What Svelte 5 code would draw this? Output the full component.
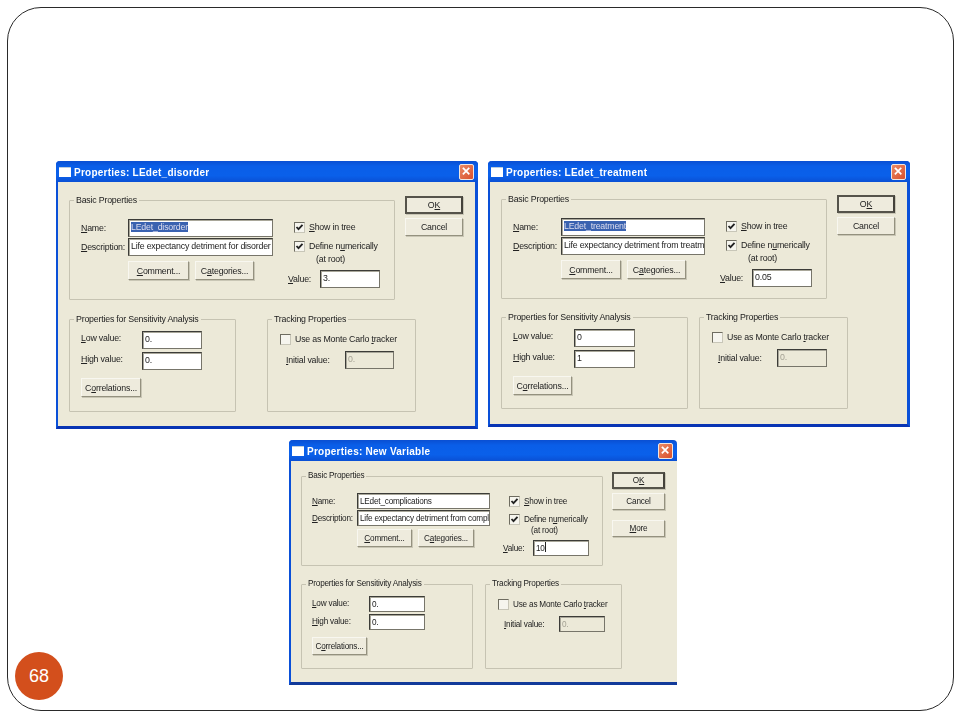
<script lang="ts">
	interface Dialog {
		key: string;
		title: string;
		name: string;
		description: string;
		selected: boolean;
		value: string;
		low: string;
		high: string;
		more: boolean;
	}

	const dialogs: Dialog[] = [
		{
			key: 'first',
			title: 'Properties: LEdet_disorder',
			name: 'LEdet_disorder',
			description: 'Life expectancy detriment for disorder',
			selected: true,
			value: '3.',
			low: '0.',
			high: '0.',
			more: false
		},
		{
			key: 'second',
			title: 'Properties: LEdet_treatment',
			name: 'LEdet_treatment',
			description: 'Life expectancy detriment from treatm',
			selected: true,
			value: '0.05',
			low: '0',
			high: '1',
			more: false
		},
		{
			key: 'third',
			title: 'Properties: New Variable',
			name: 'LEdet_complications',
			description: 'Life expectancy detriment from compl',
			selected: false,
			value: '10',
			low: '0.',
			high: '0.',
			more: true
		}
	];
</script>

<div class="slide">
	<div class="frame">
		{#each dialogs as d (d.key)}
			<section class="dialog {d.key}">
				<header class="titlebar">
					<span class="app-icon"></span>
					<h2>{d.title}</h2>
					<span class="close">
						<svg width="15" height="15" viewBox="0 0 15 15">
							<path d="M4 4l6 6M10 4l-6 6" stroke="#fff" stroke-width="2" stroke-linecap="square" />
						</svg>
					</span>
				</header>

				<div class="body">
					<fieldset class="group basic">
						<legend>Basic Properties</legend>
						<div class="basic-inner">
							<div class="fields">
								<div class="row">
									<span class="label"><u>N</u>ame:</span>
									<div class="input wide">
										{#if d.selected}<span class="sel">{d.name}</span>{:else}{d.name}{/if}
									</div>
								</div>
								<div class="row">
									<span class="label"><u>D</u>escription:</span>
									<div class="input wide">{d.description}</div>
								</div>
								<div class="actions">
									<button class="btn comment"><u>C</u>omment...</button>
									<button class="btn categories">C<u>a</u>tegories...</button>
								</div>
							</div>
							<div class="options">
								<div class="check">
									<span class="box">
										<svg width="9" height="9" viewBox="0 0 9 9"><path d="M1.5 4l2 2.2L7.5 1.8" fill="none" stroke="#222" stroke-width="1.8" /></svg>
									</span>
									<span><u>S</u>how in tree</span>
								</div>
								<div class="check define">
									<span class="box">
										<svg width="9" height="9" viewBox="0 0 9 9"><path d="M1.5 4l2 2.2L7.5 1.8" fill="none" stroke="#222" stroke-width="1.8" /></svg>
									</span>
									<span>Define n<u>u</u>merically</span>
								</div>
								<div class="at-root">(at root)</div>
								<div class="value-row">
									<span class="value-label"><u>V</u>alue:</span>
									<div class="input value">{d.value}{#if d.more}<span class="caret"></span>{/if}</div>
								</div>
							</div>
						</div>
					</fieldset>

					<div class="buttons">
						<button class="btn main default">O<u>K</u></button>
						<button class="btn main">Cancel</button>
						{#if d.more}
							<button class="btn main more"><u>M</u>ore</button>
						{/if}
					</div>

					<div class="lower">
						<fieldset class="group sens">
							<legend>Properties for Sensitivity Analysis</legend>
							<div class="sens-inner">
								<div class="row">
									<span class="label num"><u>L</u>ow value:</span>
									<div class="input num-input">{d.low}</div>
								</div>
								<div class="row">
									<span class="label num"><u>H</u>igh value:</span>
									<div class="input num-input">{d.high}</div>
								</div>
								<button class="btn corr">C<u>o</u>rrelations...</button>
							</div>
						</fieldset>
						<fieldset class="group track">
							<legend>Tracking Properties</legend>
							<div class="track-inner">
								<div class="check">
									<span class="box"></span>
									<span>Use as Monte Carlo <u>t</u>racker</span>
								</div>
								<div class="row initial">
									<span class="label init"><u>I</u>nitial value:</span>
									<div class="input disabled">0.</div>
								</div>
							</div>
						</fieldset>
					</div>
				</div>
			</section>
		{/each}

		<div class="badge">68</div>
	</div>
</div>

<style>
	:global(body) {
		margin: 0;
		background: #fff;
	}

	.slide {
		width: 960px;
		height: 720px;
		padding: 7px 6px 9px 7px;
		box-sizing: border-box;
		display: flex;
		overflow: hidden;
		background: #fff;
	}

	.frame {
		flex: 1;
		position: relative;
		border: 1px solid #2a2a2a;
		border-radius: 34px;
	}

	.badge {
		position: absolute;
		left: 7px;
		top: 644px;
		width: 48px;
		height: 48px;
		border-radius: 50%;
		background: #d34f1c;
		color: #fff;
		font: 18px/48px "Liberation Sans", sans-serif;
		text-align: center;
	}

	/* windows sit on the slide wherever they were pasted */
	.dialog {
		position: absolute;
		box-sizing: border-box;
		background: #ece9d8;
		color: #222;
		font-family: "Liberation Sans", sans-serif;
		font-size: var(--fs);
		letter-spacing: -0.2px;
		border: solid #0a50d8;
		border-width: 0 3px 3px 2px;
		border-bottom-color: #0834b4;
		border-radius: 4px 4px 0 0;
		filter: blur(0.4px);
	}

	.first {
		left: 48px;
		top: 153px;
		width: 422px;
		height: 268px;
		--fs: 8.8px;
		--body-top: 13px;
		--body-left: 11px;
		--basic-w: 326px;
		--basic-h: 105px;
		--btn-col: 58px;
		--col-gap: 10px;
		--lower-top: 14px;
		--sens-w: 167px;
		--track-w: 149px;
		--track-gap: 31px;
		--lower-h: 98px;
		--field-w: 145px;
		--field-h: 18px;
		--label-w: 47px;
		--pad-x: 11px;
		--pad-top: 14px;
		--opt-gap: 21px;
		--opt-top: 1px;
		--def-gap: 5px;
		--root-lh: 12px;
		--val-top: 5px;
		--val-label: 32px;
		--act-top: 5px;
		--num-label: 61px;
		--num-w: 60px;
		--num-gap: 3px;
		--num-lift: 4px;
		--comment-w: 61px;
		--cat-w: 59px;
		--btn-h: 19px;
		--corr-w: 60px;
		--init-w: 59px;
		--init-input: 49px;
		--value-w: 60px;
		--main-h: 18px;
	}

	.second {
		left: 480px;
		top: 153px;
		width: 422px;
		height: 266px;
		--fs: 8.8px;
		--body-top: 12px;
		--body-left: 11px;
		--basic-w: 326px;
		--basic-h: 105px;
		--btn-col: 58px;
		--col-gap: 10px;
		--lower-top: 13px;
		--sens-w: 187px;
		--track-w: 149px;
		--track-gap: 11px;
		--lower-h: 97px;
		--field-w: 144px;
		--field-h: 18px;
		--label-w: 48px;
		--pad-x: 11px;
		--pad-top: 14px;
		--opt-gap: 21px;
		--opt-top: 1px;
		--def-gap: 5px;
		--root-lh: 12px;
		--val-top: 5px;
		--val-label: 32px;
		--act-top: 5px;
		--num-label: 61px;
		--num-w: 61px;
		--num-gap: 3px;
		--num-lift: 4px;
		--comment-w: 60px;
		--cat-w: 59px;
		--btn-h: 19px;
		--corr-w: 59px;
		--init-w: 59px;
		--init-input: 50px;
		--value-w: 60px;
		--main-h: 18px;
	}

	.third {
		left: 281px;
		top: 432px;
		width: 388px;
		height: 245px;
		border-right: 0;
		border-bottom-color: #123a9a;
		--fs: 8.2px;
		--body-top: 10px;
		--body-left: 10px;
		--basic-w: 302px;
		--basic-h: 95px;
		--btn-col: 53px;
		--col-gap: 9px;
		--lower-top: 13px;
		--sens-w: 172px;
		--track-w: 137px;
		--track-gap: 12px;
		--lower-h: 90px;
		--field-w: 133px;
		--field-h: 16px;
		--label-w: 45px;
		--pad-x: 10px;
		--pad-top: 12px;
		--opt-gap: 19px;
		--opt-top: 1px;
		--def-gap: 4px;
		--root-lh: 10px;
		--val-top: 4px;
		--val-label: 30px;
		--act-top: 3px;
		--num-label: 57px;
		--num-w: 56px;
		--num-gap: 2px;
		--num-lift: 1px;
		--comment-w: 55px;
		--cat-w: 56px;
		--btn-h: 18px;
		--corr-w: 55px;
		--init-w: 55px;
		--init-input: 46px;
		--value-w: 56px;
		--main-h: 17px;
	}

	.titlebar {
		height: 21px;
		margin: 0 -3px 0 -2px;
		padding: 1px 3px 0 3px;
		box-sizing: border-box;
		display: flex;
		align-items: center;
		gap: 3px;
		background: linear-gradient(#0a4fd2, #0a5ee8 25%, #0a60ea 70%, #0a50d4);
		border-radius: 4px 4px 0 0;
	}

	.third .titlebar {
		margin-right: 0;
	}

	.app-icon {
		width: 12px;
		height: 9px;
		background: #fff;
		border-top: 1px solid #bcd;
	}

	.titlebar h2 {
		flex: 1;
		margin: 0;
		color: #fff;
		font: bold 10px "Liberation Sans", sans-serif;
		letter-spacing: 0.25px;
		white-space: nowrap;
	}

	.close {
		width: 15px;
		height: 16px;
		display: flex;
		align-items: center;
		background: linear-gradient(135deg, #e98a66, #d9502c);
		border: 1px solid #f0e6e0;
		box-sizing: border-box;
		border-radius: 2px;
		margin: -1px 1px 0 0;
	}

	.body {
		display: grid;
		grid-template-columns: var(--basic-w) var(--btn-col);
		column-gap: var(--col-gap);
		align-items: start;
		padding: var(--body-top) 0 0 var(--body-left);
	}

	.group {
		margin: 0;
		padding: 0;
		min-width: 0;
		box-sizing: border-box;
		border: 1px solid #c6c3b2;
		border-radius: 1px;
	}

	.group legend {
		margin-left: 4px;
		padding: 0 2px;
		line-height: 10px;
		white-space: nowrap;
	}

	.basic {
		width: var(--basic-w);
		height: var(--basic-h);
	}

	.basic-inner {
		display: flex;
		padding: var(--pad-top) 0 0 var(--pad-x);
	}

	.row {
		display: flex;
		align-items: center;
		margin-bottom: 1px;
	}

	.label {
		width: var(--label-w);
		white-space: nowrap;
	}

	.input {
		box-sizing: border-box;
		height: var(--field-h);
		padding: 1px 2px;
		background: #fff;
		border: 1px solid;
		border-color: #3c3c38 #77756a #77756a #3c3c38;
		box-shadow: inset 1px 1px 0 #a9a79a;
		overflow: hidden;
		white-space: nowrap;
		line-height: 13px;
		color: #222;
	}

	.wide {
		width: var(--field-w);
	}

	.sel {
		background: #3a62b0;
		color: #dde;
	}

	.actions {
		display: flex;
		gap: 6px;
		margin: var(--act-top) 0 0 var(--label-w);
	}

	.btn {
		box-sizing: border-box;
		height: var(--btn-h);
		padding: 0;
		font: inherit;
		letter-spacing: inherit;
		color: #222;
		background: #eeebdd;
		border: 1px solid;
		border-color: #f8f7f0 #94917f #94917f #f8f7f0;
		box-shadow: 1px 1px 0 #c9c6b5;
	}

	.comment {
		width: var(--comment-w);
	}

	.categories {
		width: var(--cat-w);
	}

	.options {
		display: flex;
		flex-direction: column;
		margin-left: var(--opt-gap);
		margin-top: var(--opt-top);
	}

	.check {
		display: flex;
		align-items: center;
		gap: 4px;
		height: 14px;
		white-space: nowrap;
	}

	.box {
		width: 11px;
		height: 11px;
		box-sizing: border-box;
		display: flex;
		align-items: center;
		justify-content: center;
		background: #f6f5ee;
		border: 1px solid;
		border-color: #6e6c60 #c8c6b8 #c8c6b8 #6e6c60;
	}

	.define {
		margin-top: var(--def-gap);
	}

	.at-root {
		padding-left: 22px;
		line-height: var(--root-lh);
	}

	.value-row {
		display: flex;
		align-items: center;
		margin: var(--val-top) 0 0 -6px;
	}

	.value-label {
		width: var(--val-label);
	}

	.value {
		width: var(--value-w);
	}

	.caret {
		display: inline-block;
		width: 1px;
		height: 10px;
		background: #222;
		vertical-align: -1px;
	}

	.buttons {
		display: flex;
		flex-direction: column;
		gap: 4px;
		padding-top: 1px;
	}

	.main {
		width: 100%;
		height: var(--main-h);
	}

	.default {
		border: 2px solid #55534a;
		border-right-color: #44423a;
	}

	.more {
		margin-top: 6px;
	}

	.lower {
		grid-column: 1 / -1;
		display: flex;
		gap: var(--track-gap);
		margin-top: var(--lower-top);
	}

	.sens,
	.track {
		height: var(--lower-h);
	}

	.sens {
		width: var(--sens-w);
	}

	.sens-inner {
		padding: 7px 0 0 var(--pad-x);
	}

	.track {
		width: var(--track-w);
	}

	.track-inner {
		padding: 8px 0 0 12px;
	}

	.label.num {
		width: var(--num-label);
		margin-bottom: var(--num-lift);
	}

	.num-input {
		width: var(--num-w);
	}

	.sens .row {
		margin-bottom: var(--num-gap);
	}

	.corr {
		width: var(--corr-w);
		margin-top: 5px;
	}

	.initial {
		margin: 5px 0 0 6px;
	}

	.label.init {
		width: var(--init-w);
	}

	.disabled {
		width: var(--init-input);
		background: #ece9d8;
		color: #a5a294;
	}
</style>
